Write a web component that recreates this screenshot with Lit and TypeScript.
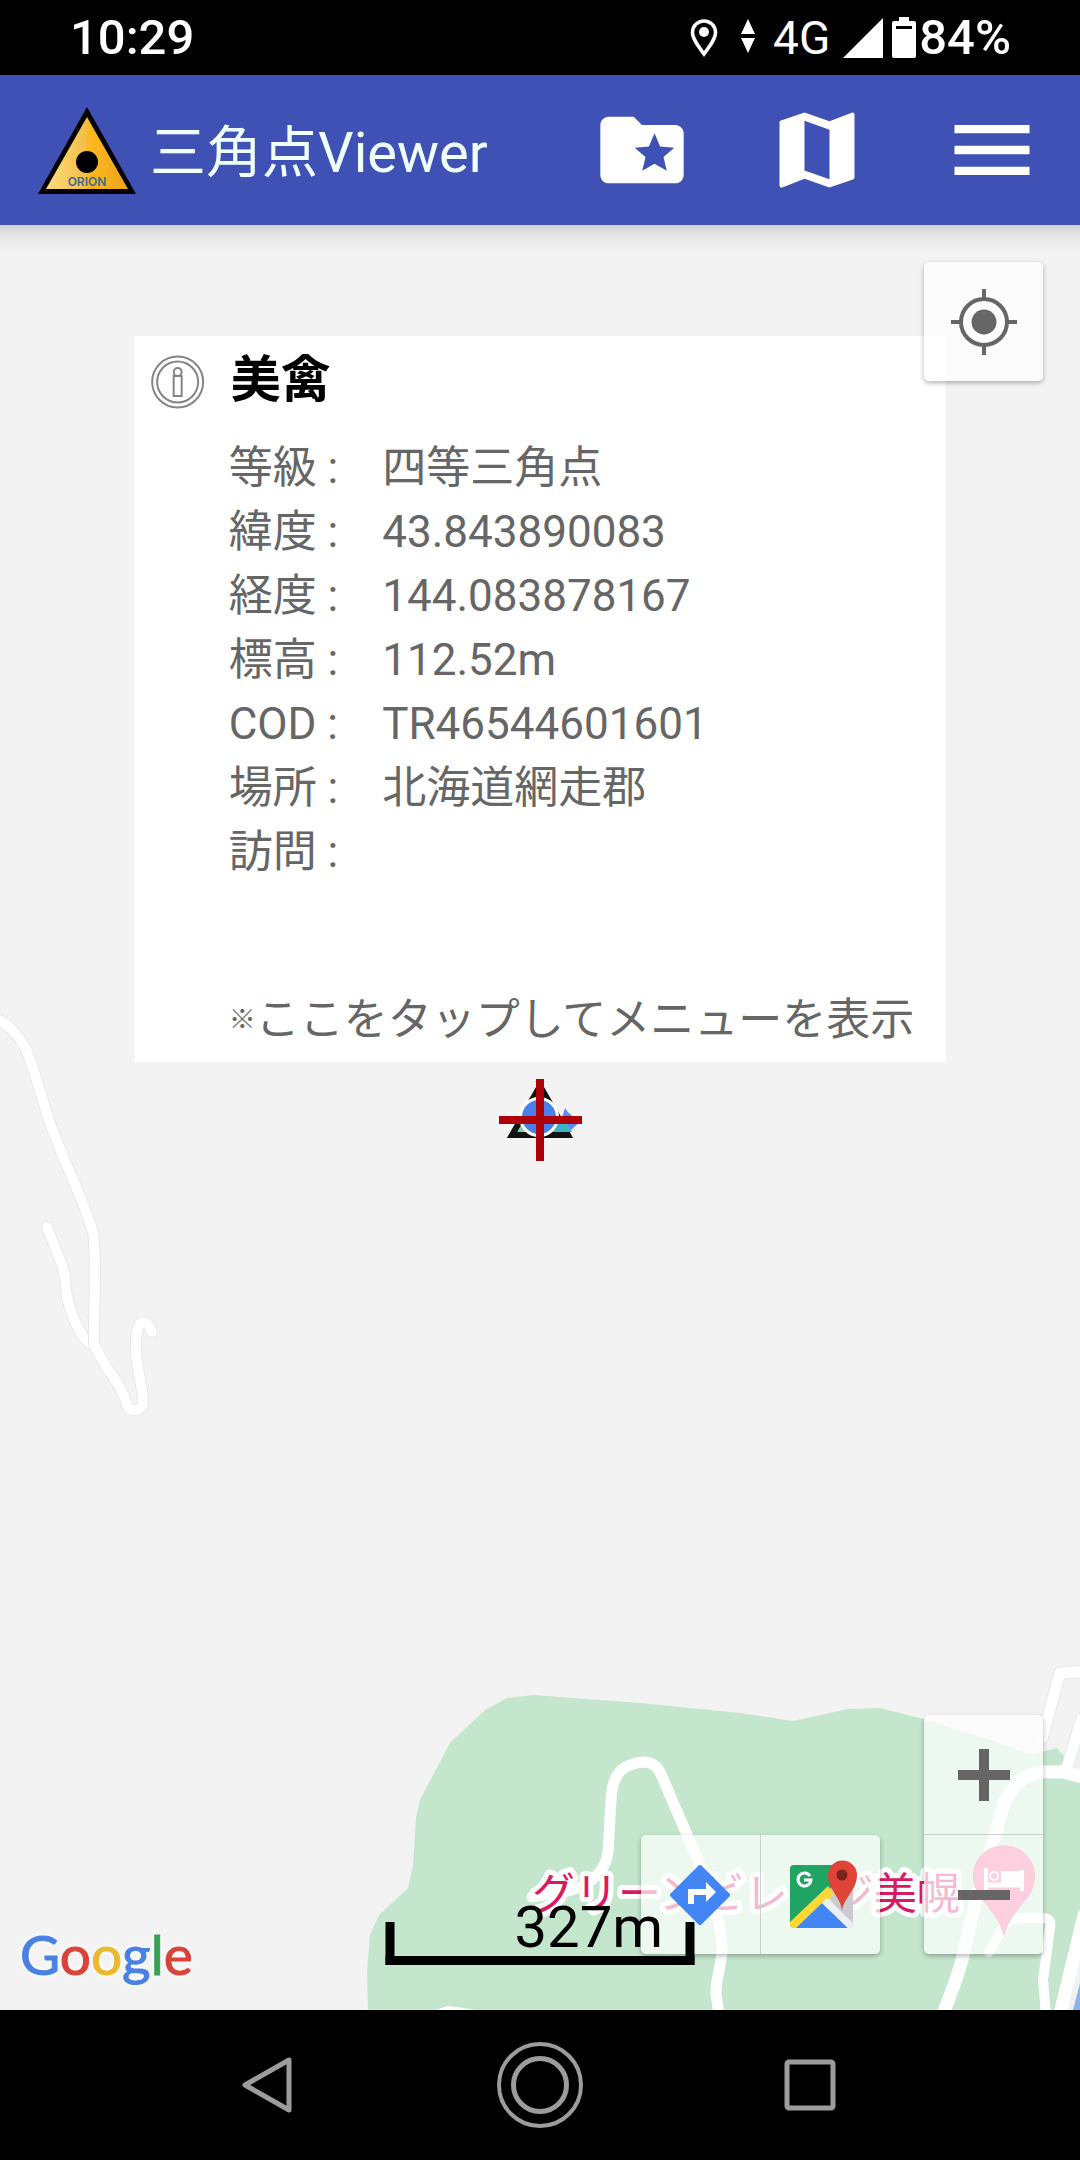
import { LitElement, html, css, svg } from "lit";
import { customElement, property, state } from "lit/decorators.js";

interface Station {
  name: string;
  fields: [string, string][];
}

const station: Station = {
  name: "美禽",
  fields: [
    ["等級", "四等三角点"],
    ["緯度", "43.843890083"],
    ["経度", "144.083878167"],
    ["標高", "112.52m"],
    ["COD", "TR46544601601"],
    ["場所", "北海道網走郡"],
    ["訪問", ""],
  ],
};

@customElement("status-bar")
class StatusBar extends LitElement {
  static styles = css`
    :host {
      display: flex;
      align-items: center;
      justify-content: space-between;
      height: 75px;
      padding: 0 69px 0 70px;
      background: #000;
      color: #fff;
      font-weight: 500;
      font-size: 49px;
      line-height: 72px;
    }
    .icons {
      display: flex;
      align-items: center;
    }
    .net {
      font-size: 46px;
      font-weight: 400;
      margin: 0 13px 0 18px;
    }
    svg {
      display: block;
    }
    .pin {
      margin-right: 22px;
    }
    .signal {
      margin-right: 9px;
    }
    .battery {
      margin-right: 3px;
    }
  `;

  render() {
    return html`
      <span>10:29</span>
      <div class="icons">
        <svg class="pin" width="30" height="40" viewBox="0 0 30 40" fill="none">
          <path d="M15 3C8.5 3 3.5 8 3.5 14.5C3.5 21 9 28 15 36C21 28 26.5 21 26.5 14.5C26.5 8 21.5 3 15 3Z" stroke="#fff" stroke-width="3.5"></path>
          <circle cx="15" cy="14" r="5" fill="#fff"></circle>
        </svg>
        <svg width="14" height="40" viewBox="0 0 14 40" fill="#fff">
          <path d="M7 1l7 15H0zM7 35L0 20h14z"></path>
        </svg>
        <span class="net">4G</span>
        <svg class="signal" width="40" height="40" viewBox="0 0 40 40" fill="#fff">
          <path d="M40 0v40H0z"></path>
        </svg>
        <svg class="battery" width="24" height="41" viewBox="0 0 24 41">
          <path fill="#fff" fill-rule="evenodd" d="M7 0h10v4h5q2 0 2 2v33q0 2-2 2H2q-2 0-2-2V6q0-2 2-2h5zM4 9v3h16V9z"></path>
        </svg>
        <span>84%</span>
      </div>
    `;
  }
}

@customElement("app-header")
class AppHeader extends LitElement {
  static styles = css`
    :host {
      display: flex;
      align-items: center;
      height: 150px;
      padding: 0 38px 0 37px;
      box-sizing: border-box;
      background: #3f51b5;
      color: #f0ffff;
    }
    svg {
      display: block;
    }
    h1 {
      flex: 1;
      margin: 0 0 0 13px;
      padding-top: 6px;
      font-size: 56px;
      line-height: 72px;
      font-weight: 400;
      white-space: nowrap;
    }
    nav {
      display: flex;
      gap: 75px;
    }
    button {
      padding: 0;
      border: 0;
      background: none;
      color: #fff;
    }
  `;

  private action(label: string, path: string) {
    return html`<button aria-label=${label}>
      <svg width="100" height="100" viewBox="0 0 24 24" fill="currentColor"><path d=${path}></path></svg>
    </button>`;
  }

  render() {
    return html`
      <svg width="100" height="88" viewBox="0 0 100 88">
        <defs>
          <linearGradient id="gold" x1="0" x2="1">
            <stop offset="0" stop-color="#ffdc7a"></stop>
            <stop offset="0.49" stop-color="#f3bd48"></stop>
            <stop offset="0.51" stop-color="#fdb920"></stop>
            <stop offset="1" stop-color="#eda41c"></stop>
          </linearGradient>
        </defs>
        <path d="M50 1L99 88H1z" fill="#000"></path>
        <path d="M50 11L91 83H9z" fill="url(#gold)"></path>
        <circle cx="50" cy="56" r="11" fill="#000"></circle>
        <text x="50" y="80" text-anchor="middle" font-family="Inter, sans-serif" font-size="12" font-weight="600" fill="#3a6a94">ORION</text>
      </svg>
      <h1>三角点Viewer</h1>
      <nav>
        ${this.action(
          "お気に入り",
          "M20 6h-8l-2-2H4c-1.1 0-2 .9-2 2v12c0 1.1.9 2 2 2h16c1.1 0 2-.9 2-2V8c0-1.1-.9-2-2-2zm-2.06 11L15 15.28 12.06 17l.78-3.33-2.59-2.24 3.41-.29L15 8l1.34 3.14 3.41.29-2.59 2.24.78 3.33z",
        )}
        ${this.action(
          "地図",
          "M20.5 3l-.16.03L15 5.1 9 3 3.36 4.9c-.21.07-.36.25-.36.48V20.5c0 .28.22.5.5.5l.16-.03L9 18.9l6 2.1 5.64-1.9c.21-.07.36-.25.36-.48V3.5c0-.28-.22-.5-.5-.5zM15 19l-6-2.11V5l6 2.11V19z",
        )}
        ${this.action("メニュー", "M3 18h18v-2H3v2zm0-5h18v-2H3v2zm0-7v2h18V6H3z")}
      </nav>
    `;
  }
}

@customElement("station-card")
class StationCard extends LitElement {
  @property({ attribute: false }) station: Station = station;

  static styles = css`
    :host {
      display: grid;
      grid-template-columns: 54px auto;
      column-gap: 24px;
      padding: 12px 31px 10px 16px;
      background: #fff;
      color: #666;
      font-size: 44px;
      line-height: 64px;
      white-space: nowrap;
    }
    svg {
      display: block;
      margin-top: 7px;
    }
    h2 {
      margin: 0 0 24px;
      padding-left: 2px;
      color: #000;
      font-size: 50px;
      line-height: 64px;
      font-weight: 700;
    }
    dl {
      grid-column: 2;
      display: grid;
      grid-template-columns: auto 1fr;
      grid-auto-rows: 64px;
      column-gap: 44px;
      margin: 0 0 104px;
    }
    dd {
      margin: 0;
    }
    .menu {
      grid-column: 2;
      display: flex;
      align-items: center;
      padding: 0;
      border: 0;
      background: none;
      color: inherit;
      font: inherit;
    }
    .mark {
      font-size: 27px;
      font-weight: 700;
    }
  `;

  render() {
    return html`
      <svg width="54" height="54" viewBox="0 0 54 54" fill="none" stroke="#858585" stroke-width="2">
        <circle cx="27" cy="27" r="25.5"></circle>
        <circle cx="27" cy="27" r="20.5"></circle>
        <circle cx="27" cy="17" r="4"></circle>
        <path d="M23 21h8v20h-8z"></path>
      </svg>
      <h2>${this.station.name}</h2>
      <dl>
        ${this.station.fields.map(([label, value]) => html`<dt>${label} :</dt><dd>${value}</dd>`)}
      </dl>
      <button class="menu"><span class="mark">※</span>ここをタップしてメニューを表示</button>
    `;
  }
}

const road = (d: string, width: number) => svg`
  <path d=${d} stroke="#e6e7e8" stroke-width=${width + 2}></path>
  <path d=${d} stroke="#fff" stroke-width=${width}></path>`;

@customElement("station-map")
class StationMap extends LitElement {
  @state() private distance = "327m";

  static styles = css`
    :host {
      position: relative;
      display: block;
      overflow: hidden;
      background: #f3f3f4;
    }
    svg {
      display: block;
    }
    .canvas {
      position: absolute;
      inset: 0;
      width: 100%;
      height: 100%;
    }
    .poi {
      font-family: "Noto Sans CJK JP", sans-serif;
      font-size: 43px;
      font-weight: 400;
      fill: #d81b60;
      stroke: #fff;
      stroke-width: 10px;
      stroke-linejoin: round;
      paint-order: stroke;
    }
    .shade {
      position: absolute;
      inset: 0 0 auto;
      height: 28px;
      background: linear-gradient(#cfcfd2, #e4e4e5 30%, #f3f3f400);
    }
    .card {
      position: absolute;
      left: 50%;
      bottom: calc(50% + 56px);
      transform: translateX(-50%);
    }
    .panel {
      display: flex;
      background: rgba(255, 255, 255, 0.7);
      border-radius: 5px;
      box-shadow: 0 2px 5px rgba(0, 0, 0, 0.3);
    }
    .column {
      flex-direction: column;
    }
    .panel button {
      display: grid;
      place-items: center;
      width: 119px;
      height: 119px;
      padding: 0;
      border: 0;
      background: none;
    }
    .panel button + button {
      border-left: 1px solid #c9d2cc;
      box-sizing: content-box;
    }
    .column button + button {
      border-left: 0;
      border-top: 1px solid #c9d2cc;
    }
    .locate {
      position: absolute;
      top: 37px;
      right: 37px;
    }
    .tools {
      position: absolute;
      right: 37px;
      bottom: 56px;
      display: flex;
      align-items: flex-end;
      gap: 44px;
    }
    .google {
      position: absolute;
      left: 20px;
      bottom: 24px;
      font-family: Lato, sans-serif;
      font-size: 55px;
      line-height: 64px;
      -webkit-text-stroke: 1px currentColor;
      text-shadow: 0 0 4px #fff, 0 0 6px #fff;
    }
    .b {
      color: #4a80e4;
    }
    .r {
      color: #d9433a;
    }
    .y {
      color: #eab92d;
    }
    .g {
      color: #37a156;
    }
    .ruler {
      position: absolute;
      left: 50%;
      bottom: 45px;
      transform: translateX(-50%);
      display: flex;
      align-items: flex-end;
      box-sizing: border-box;
      width: 309px;
      height: 43px;
      padding-left: 120px;
      border: 9px solid #000;
      border-top: 0;
      color: #000;
      font-size: 58px;
      line-height: 58px;
      pointer-events: none;
    }
  `;

  private terrain() {
    return svg`
      <path fill="#c3e6cc" d="M368 2010L367 1972L370 1935L379 1915L408 1888L413 1865L416 1818L420 1800L450 1743L485 1710L507 1698L533 1695L640 1703L740 1713L793 1721L848 1709L880 1708L923 1719L1003 1744L1030 1755L1057 1748L1066 1758L1080 1775V2010z"></path>
      <path fill="#f0f1f3" d="M1080 1940V2010H1065zM1080 1740V1768H1072z"></path>
      <path fill="#8ab4f0" d="M1080 1983V2010H1073z"></path>
      <g fill="none" stroke-linecap="round" stroke-linejoin="round">
        ${road("M94 1345C84 1345 72 1318 67 1297C65 1283 66 1275 62 1265L47 1227", 10)}
        ${road("M-5 1018C8 1023 19 1036 25 1047C33 1064 44 1106 50 1123C62 1158 83 1198 93 1232C97 1256 94 1300 94 1345L107 1368C117 1382 124 1392 127 1405C130 1413 143 1412 143 1402C143 1385 135 1366 136 1345C136 1318 146 1316 152 1332", 10)}
        ${road("M1090 1671L1060 1673L1042 1738", 11)}
        ${road("M1082 1718L1067 1768", 11)}
      </g>
      <g fill="none" stroke="#fff" stroke-linecap="round" stroke-linejoin="round">
        <path stroke-width="11" d="M532 1897L572 1890C592 1884 606 1870 608 1852L611 1800C612 1770 626 1764 643 1762C658 1762 660 1772 666 1786L704 1874C712 1892 721 1925 722 1950C721 1970 715 1980 716 1995L719 2014"></path>
        <path stroke-width="13" d="M1085 1778L1064 1772L1043 1772C1020 1774 1008 1792 1003 1807L988 1858C976 1895 970 1925 962 1960C955 1985 950 1995 943 2014"></path>
        <path stroke-width="10" d="M989 1952L1004 1926Q1010 1918 1020 1918L1044 1918Q1052 1919 1050 1928L1043 1980L1046 2014"></path>
        <path stroke-width="13" d="M1084 1915L1060 2014"></path>
        <path stroke-width="6" d="M433 2014L448 2009L476 2013"></path>
      </g>
      <path fill="#fa5f94" stroke="#e84c82" d="M1004 1935C1000 1920 990 1908 981 1898C964 1874 978 1846 1004 1846C1030 1846 1044 1874 1027 1898C1018 1908 1008 1920 1004 1935z"></path>
      <g fill="none" stroke="#fff">
        <path stroke-width="4" d="M986 1868V1891M1022 1870V1891"></path>
        <path stroke-width="5" d="M986 1885H1022"></path>
        <circle cx="994" cy="1876" r="4" stroke-width="2"></circle>
      </g>
      <path fill="#fff" d="M1001 1871H1018Q1023 1872 1023 1880V1885H1001z"></path>
      <text class="poi" x="532" y="1909">グリーンビレッジ美幌</text>
    `;
  }

  private marker() {
    return svg`
      <path d="M540 1086L568 1135H512z" fill="#7fd0b0" stroke="#111" stroke-width="6"></path>
      <path d="M556 1118H566L572 1132H550z" fill="#38b4c4"></path>
      <path d="M548 1135H568" stroke="#111" stroke-width="6"></path>
      <path d="M565 1108Q570 1117 582 1120L571 1130L562 1118z" fill="#5b8def"></path>
      <circle cx="539" cy="1117" r="18.5" fill="#4a80ea" stroke="#fff" stroke-width="3"></circle>
      <path d="M540 1079V1161M499 1120H582" stroke="#ad0008" stroke-width="8"></path>
    `;
  }

  render() {
    return html`
      <svg class="canvas" viewBox="0 225 1080 1785" preserveAspectRatio="xMidYMid slice">
        ${this.terrain()} ${this.marker()}
      </svg>
      <div class="shade"></div>
      <station-card class="card"></station-card>

      <div class="panel locate">
        <button aria-label="現在地">
          <svg width="68" height="68" viewBox="0 0 68 68" fill="none" stroke="#666" stroke-width="4">
            <circle cx="34" cy="34" r="23"></circle>
            <path d="M34 1v10M34 57v10M1 34h10M57 34h10"></path>
            <circle cx="34" cy="34" r="12.5" fill="#666" stroke="none"></circle>
          </svg>
        </button>
      </div>

      <div class="google" aria-label="Google"><span class="b">G</span><span class="r">o</span><span class="y">o</span><span class="b">g</span><span class="g">l</span><span class="r">e</span></div>

      <div class="tools">
        <div class="panel">
          <button aria-label="ルート">
            <svg width="62" height="62" viewBox="0 0 62 62">
              <path d="M30 3L58 31L30 59L2 31z" fill="#4285f4" stroke="#4285f4" stroke-width="4" stroke-linejoin="round"></path>
              <path d="M18 40V25H36V18L46 28L36 38V31H24V40z" fill="#fff"></path>
            </svg>
          </button>
          <button aria-label="Google マップで開く">
            <svg width="74" height="70" viewBox="-6 0 74 70">
              <clipPath id="tile"><rect x="0" y="5" width="63" height="63" rx="4"></rect></clipPath>
              <g clip-path="url(#tile)">
                <path d="M0 5h63v63H0z" fill="#c9cbce"></path>
                <path d="M0 5h44v20L0 66z" fill="#1fa463"></path>
                <path d="M34 32L63 68H0z" fill="#e8eaec"></path>
                <path d="M0 62L38 26L44 34L7 68H0z" fill="#fdd835"></path>
                <path d="M32 43L58 68H6z" fill="#4285f4"></path>
                <path d="M32 43L37 38L63 63V68H58z" fill="#eceff1"></path>
              </g>
              <path d="M20 16A6.5 6.5 0 1 0 21 20H14" fill="none" stroke="#fff" stroke-width="3"></path>
              <path d="M52 51C51 37 38 30 38 15A14.5 14.5 0 0 1 67 15C67 30 54 37 52 51z" fill="#e04439"></path>
              <circle cx="52" cy="15" r="5.5" fill="#7b231e"></circle>
            </svg>
          </button>
        </div>
        <div class="panel column">
          <button aria-label="拡大">
            <svg width="52" height="52" viewBox="0 0 52 52" fill="#666"><path d="M21 0h10v21h21v10H31v21H21V31H0V21h21z"></path></svg>
          </button>
          <button aria-label="縮小">
            <svg width="52" height="52" viewBox="0 0 52 52" fill="#666"><path d="M0 21h52v10H0z"></path></svg>
          </button>
        </div>
      </div>

      <div class="ruler">${this.distance}</div>
    `;
  }
}

@customElement("nav-bar")
class NavBar extends LitElement {
  static styles = css`
    :host {
      display: flex;
      justify-content: space-around;
      height: 150px;
      padding: 0 135px;
      box-sizing: border-box;
      background: #000;
    }
    button {
      flex: 1;
      display: grid;
      place-items: center;
      padding: 0;
      border: 0;
      background: none;
    }
    svg {
      display: block;
      fill: none;
      stroke: #9c9c9c;
      stroke-width: 5px;
      stroke-linejoin: round;
    }
    .ring {
      stroke-width: 4px;
    }
  `;

  render() {
    return html`
      <button aria-label="戻る">
        <svg width="90" height="90" viewBox="0 0 90 90"><path d="M64 20V70L20 45z"></path></svg>
      </button>
      <button aria-label="ホーム">
        <svg width="90" height="90" viewBox="0 0 90 90">
          <circle class="ring" cx="45" cy="45" r="41"></circle>
          <circle cx="45" cy="45" r="26.5"></circle>
        </svg>
      </button>
      <button aria-label="履歴">
        <svg width="90" height="90" viewBox="0 0 90 90"><rect x="22" y="22" width="46" height="46" rx="2"></rect></svg>
      </button>
    `;
  }
}

@customElement("app-root")
class AppRoot extends LitElement {
  static styles = css`
    :host {
      display: flex;
      flex-direction: column;
      min-height: 100vh;
      font-family: Roboto, "Noto Sans CJK JP", sans-serif;
    }
    station-map {
      flex: 1;
    }
  `;

  render() {
    return html`
      <status-bar></status-bar>
      <app-header></app-header>
      <station-map></station-map>
      <nav-bar></nav-bar>
    `;
  }
}
